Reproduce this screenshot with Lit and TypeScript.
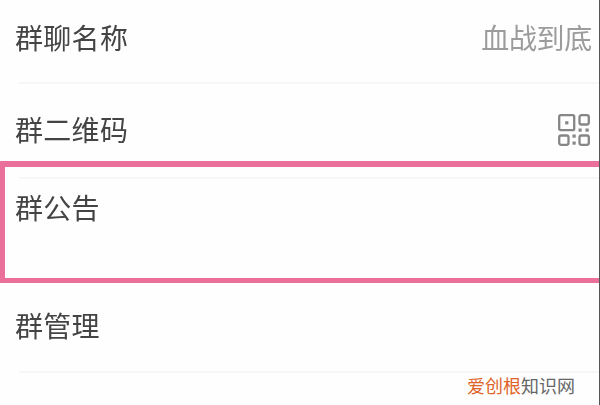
import { LitElement, html, css, svg } from "lit";
import { customElement } from "lit/decorators.js";

@customElement("app-root")
export class AppRoot extends LitElement {
  static styles = css`
    :host {
      display: block;
      position: relative;
      width: 600px;
      height: 405px;
      overflow: hidden;
      background: #fefefe;
      font-family: "Noto Sans CJK SC", "Liberation Sans", sans-serif;
    }
    .page { filter: blur(0.6px); height: 405px; overflow: hidden; }
    .row {
      display: flex;
      align-items: center;
      justify-content: space-between;
      padding: 0 8px 0 15px;
      font-size: 28px;
      letter-spacing: 0.3px;
      color: #444;
      box-sizing: border-box;
    }
    .rule { height: 2px; background: #f6f6f6; margin-left: 19px; }
    .r1 { height: 82px; padding-bottom: 8px; }
    .r2 { height: 77px; padding-top: 12px; padding-right: 10px; }
    .notice {
      height: 122px;
      border: solid #ea709b;
      border-width: 6px 0 5px 5px;
      box-sizing: border-box;
      padding: 0 0 0 10px;
      font-size: 28px;
      letter-spacing: 0.3px;
      color: #444;
    }
    .notice .rule { margin: 10px 0 0 4px; }
    .notice .label { line-height: 40px; margin-top: 8px; }
    .r4 { height: 88px; padding-bottom: 4px; }
    .r5 { padding-top: 25px; }
    .value { color: #9c9c9c; font-size: 28px; letter-spacing: -0.3px; }
    .qr { display: block; margin-top: 3px; }
    .mark {
      position: absolute;
      right: 25px;
      bottom: 8px;
      font-size: 18px;
      line-height: 24px;
      color: #666;
    }
    .mark span { color: #e0642a; }
    .edge { position: absolute; top: 0; right: 0; bottom: 0; width: 1px; background: #555; }
  `;

  render() {
    return html`
      <div class="page">
        <div class="row r1"><span>群聊名称</span><span class="value">血战到底</span></div>
        <div class="rule"></div>
        <div class="row r2">
          <span>群二维码</span>
          <svg class="qr" width="32" height="32" viewBox="0 0 32 32" fill="none" stroke="#868686" stroke-width="2.3">
            ${svg`
              <rect x="1.2" y="1.2" width="15" height="15" rx="1.5" />
              <rect x="21.5" y="1.2" width="9.3" height="9.3" rx="2" />
              <rect x="1.2" y="21.5" width="9.3" height="9.3" rx="2" />
              <rect x="21.5" y="21.5" width="9.3" height="9.3" rx="2" />
              <g fill="#868686" stroke="none">
                <rect x="7.2" y="7.2" width="3.2" height="3.2" />
                <rect x="20.5" y="14.5" width="3.2" height="3.2" />
                <rect x="27.5" y="14.5" width="3.2" height="3.2" />
                <rect x="14.5" y="20.5" width="3.2" height="3.2" />
                <rect x="14.5" y="27.5" width="3.2" height="3.2" />
              </g>
            `}
          </svg>
        </div>
        <div class="notice">
          <div class="rule"></div>
          <div class="label">群公告</div>
        </div>
        <div class="row r4"><span>群管理</span></div>
        <div class="rule"></div>
        <div class="row r5"><span>备注</span></div>
      </div>
      <div class="mark"><span>爱创根</span>知识网</div>
      <div class="edge"></div>
    `;
  }
}
